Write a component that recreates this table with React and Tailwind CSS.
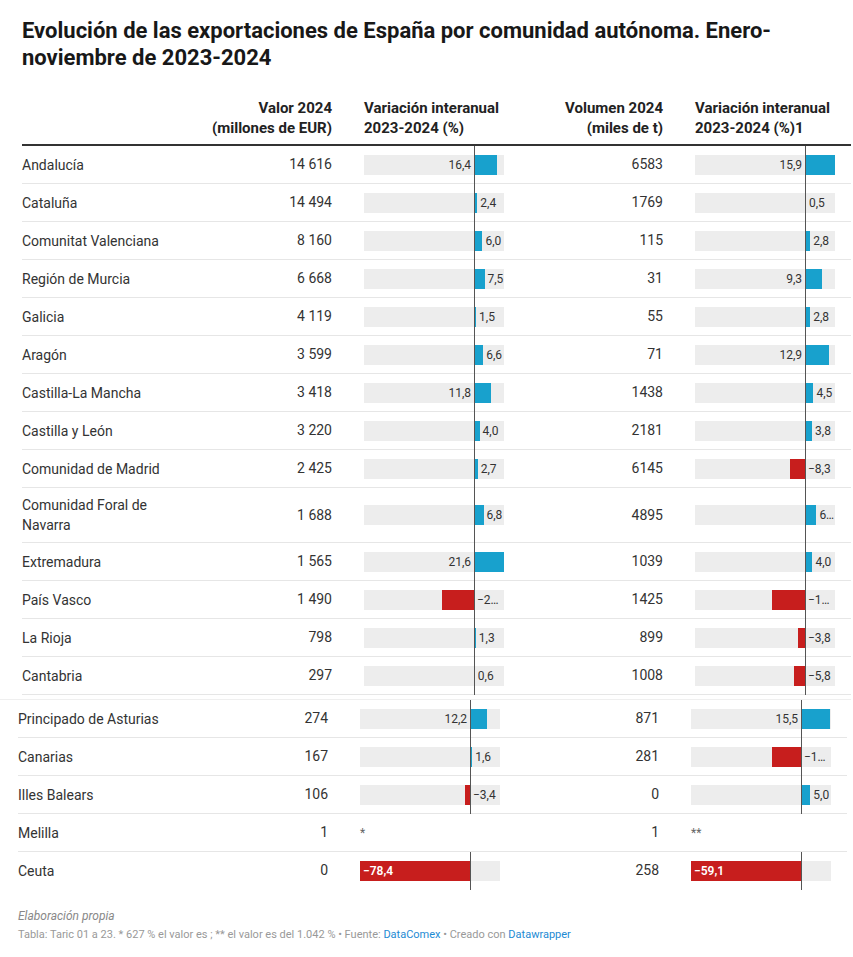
const S1 = 1.4;
const S2 = 140 / 75;

const top = [
  { n: 'Andalucía', a: '14 616', v1: 16.4, l1: '16,4', m1: 'l', b: '6583', v2: 15.9, l2: '15,9', m2: 'l' },
  { n: 'Cataluña', a: '14 494', v1: 2.4, l1: '2,4', m1: 'r', b: '1769', v2: 0.5, l2: '0,5', m2: 'r' },
  { n: 'Comunitat Valenciana', a: '8 160', v1: 6.0, l1: '6,0', m1: 'r', b: '115', v2: 2.8, l2: '2,8', m2: 'r' },
  { n: 'Región de Murcia', a: '6 668', v1: 7.5, l1: '7,5', m1: 'r', b: '31', v2: 9.3, l2: '9,3', m2: 'l' },
  { n: 'Galicia', a: '4 119', v1: 1.5, l1: '1,5', m1: 'r', b: '55', v2: 2.8, l2: '2,8', m2: 'r' },
  { n: 'Aragón', a: '3 599', v1: 6.6, l1: '6,6', m1: 'r', b: '71', v2: 12.9, l2: '12,9', m2: 'l' },
  { n: 'Castilla-La Mancha', a: '3 418', v1: 11.8, l1: '11,8', m1: 'l', b: '1438', v2: 4.5, l2: '4,5', m2: 'r' },
  { n: 'Castilla y León', a: '3 220', v1: 4.0, l1: '4,0', m1: 'r', b: '2181', v2: 3.8, l2: '3,8', m2: 'r' },
  { n: 'Comunidad de Madrid', a: '2 425', v1: 2.7, l1: '2,7', m1: 'r', b: '6145', v2: -8.3, l2: '−8,3', m2: 'r' },
  { n: 'Comunidad Foral de Navarra', a: '1 688', v1: 6.8, l1: '6,8', m1: 'r', b: '4895', v2: 6.1, l2: '6…', m2: 'r' },
  { n: 'Extremadura', a: '1 565', v1: 21.6, l1: '21,6', m1: 'l', b: '1039', v2: 4.0, l2: '4,0', m2: 'r' },
  { n: 'País Vasco', a: '1 490', v1: -22.9, l1: '−2…', m1: 'r', b: '1425', v2: -17.7, l2: '−1…', m2: 'r' },
  { n: 'La Rioja', a: '798', v1: 1.3, l1: '1,3', m1: 'r', b: '899', v2: -3.8, l2: '−3,8', m2: 'r' },
  { n: 'Cantabria', a: '297', v1: 0.6, l1: '0,6', m1: 'r', b: '1008', v2: -5.8, l2: '−5,8', m2: 'r' },
];

const bottom = [
  { n: 'Principado de Asturias', a: '274', v1: 12.2, l1: '12,2', m1: 'l', b: '871', v2: 15.5, l2: '15,5', m2: 'l' },
  { n: 'Canarias', a: '167', v1: 1.6, l1: '1,6', m1: 'r', b: '281', v2: -15.5, l2: '−1…', m2: 'r' },
  { n: 'Illes Balears', a: '106', v1: -3.4, l1: '−3,4', m1: 'r', b: '0', v2: 5.0, l2: '5,0', m2: 'r' },
  { n: 'Melilla', a: '1', s1: '*', b: '1', s2: '**' },
  { n: 'Ceuta', a: '0', v1: -78.4, l1: '−78,4', m1: 'in', b: '258', v2: -59.1, l2: '−59,1', m2: 'in' },
];

function Bar({ v, scale, label, mode, star }) {
  if (star) {
    return (
      <div className="w-[140px] flex items-center">
        <span className="text-[12px] text-[#666] leading-none">{star}</span>
      </div>
    );
  }
  const w = Math.abs(v) * scale;
  const left = v >= 0 ? 110 : 110 - w;
  let lab;
  if (mode === 'in') {
    lab = (
      <span className="absolute left-[3px] top-0 text-[12px] leading-[20px] font-semibold text-white">{label}</span>
    );
  } else if (mode === 'l') {
    lab = (
      <span className="absolute top-0 text-[12px] leading-[20px] text-[#333]" style={{ right: 33 }}>{label}</span>
    );
  } else {
    lab = (
      <span className="absolute top-0 text-[12px] leading-[20px] text-[#333] whitespace-nowrap" style={{ left: (v >= 0 ? 110 + w : 110) + 3 }}>{label}</span>
    );
  }
  return (
    <div className="relative w-[140px] flex items-center">
      <div className="relative w-full h-[20px] bg-[#ededed]">
        <div className={`absolute top-0 bottom-0 ${v >= 0 ? 'bg-[#18a1cd]' : 'bg-[#c71e1d]'}`} style={{ left, width: w }} />
        {lab}
      </div>
      <div className="absolute left-[110px] top-0 -bottom-px w-px bg-[#555] z-10" />
    </div>
  );
}

function Row({ r, last }) {
  return (
    <div className={`flex items-stretch text-[14px] text-[#333] ${last ? '' : 'border-b border-[#e6e6e6]'}`}>
      <div className="w-[160px] min-h-[37px] py-[7px] flex items-center leading-[20px]">{r.n}</div>
      <div className="w-[150px] flex items-center justify-end">{r.a}</div>
      <div className="w-[32px]" />
      <Bar v={r.v1} scale={S1} label={r.l1} mode={r.m1} star={r.s1} />
      <div className="w-[159px] flex items-center justify-end">{r.b}</div>
      <div className="w-[32px]" />
      <Bar v={r.v2} scale={S2} label={r.l2} mode={r.m2} star={r.s2} />
    </div>
  );
}

export default function App() {
  return (
    <div className="w-[853px] h-[957px] bg-white font-['Roboto',sans-serif] overflow-hidden">
      <div className="pl-[22px] pr-[40px] pt-[17px]">
        <h1 className="text-[22px] leading-[27px] font-bold text-[#181818]">
          Evolución de las exportaciones de España por comunidad autónoma. Enero-noviembre de 2023-2024
        </h1>
      </div>

      <div className="ml-[22px] w-[829px] mt-[27px]">
        <div className="flex text-[15px] leading-[20px] font-bold text-[#222] pb-[6px] border-b-2 border-[#333]">
          <div className="w-[160px]" />
          <div className="w-[150px] text-right">Valor 2024<br />(millones de EUR)</div>
          <div className="w-[32px]" />
          <div className="w-[140px] whitespace-nowrap">Variación interanual<br />2023-2024 (%)</div>
          <div className="w-[159px] text-right">Volumen 2024<br />(miles de t)</div>
          <div className="w-[32px]" />
          <div className="w-[140px] whitespace-nowrap">Variación interanual<br />2023-2024 (%)1</div>
        </div>
        {top.map((r) => (
          <Row key={r.n} r={r} />
        ))}
      </div>

      <div className="mt-[4px] w-[851px] border-t border-[#efefef]">
        <div className="ml-[18px] w-[829px]">
          {bottom.map((r, i) => (
            <Row key={r.n} r={r} last={i === bottom.length - 1} />
          ))}
        </div>
      </div>

      <div className="pl-[18px] mt-[19px]">
        <p className="text-[12px] leading-[16px] italic text-[#888]">Elaboración propia</p>
        <p className="text-[11px] leading-[18px] text-[#999] mt-[2px]">
          Tabla: Taric 01 a 23. * 627 % el valor es ; ** el valor es del 1.042 % • Fuente:{' '}
          <span className="text-[#1d8ad3]">DataComex</span> • Creado con{' '}
          <span className="text-[#1d8ad3]">Datawrapper</span>
        </p>
      </div>
    </div>
  );
}
